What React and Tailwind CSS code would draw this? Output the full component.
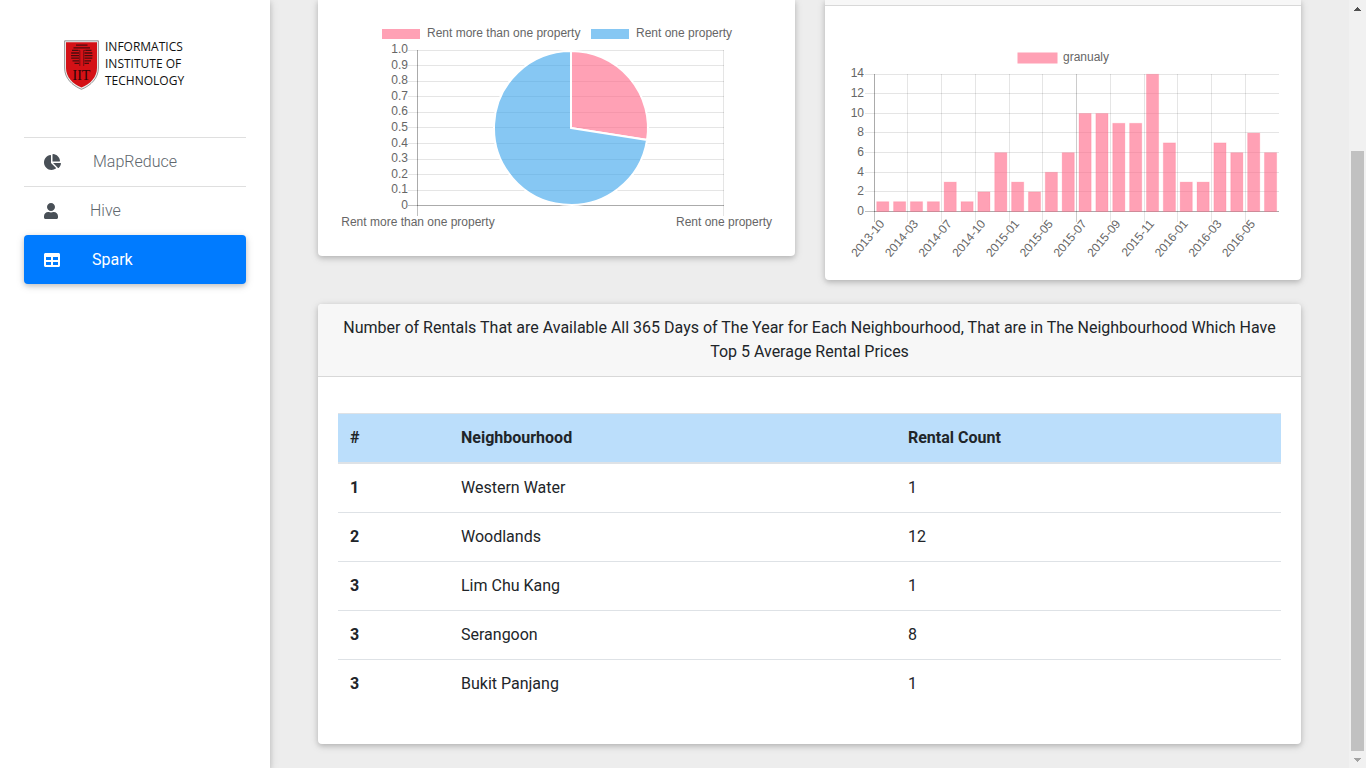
import React from "react";
import { FaChartPie, FaUser, FaTable } from "react-icons/fa";

const CARD =
  "overflow-hidden rounded bg-white shadow-[0_2px_5px_rgba(0,0,0,0.16),0_2px_10px_rgba(0,0,0,0.12)]";
const CHART_FONT = "font-['Liberation_Sans',Arial,sans-serif] text-[12px] fill-[#666666]";

const PINK = "rgba(255,99,132,0.6)";
const BLUE = "rgba(54,162,235,0.6)";
const GRID = "rgba(0,0,0,0.1)";
const ZERO = "rgba(0,0,0,0.25)";

const NAV = [
  { label: "MapReduce", Icon: FaChartPie, size: "w-[17px]" },
  { label: "Hive", Icon: FaUser, size: "w-[14px]" },
  { label: "Spark", Icon: FaTable, size: "w-4", active: true },
];

const ROWS = [
  ["1", "Western Water", "1"],
  ["2", "Woodlands", "12"],
  ["3", "Lim Chu Kang", "1"],
  ["3", "Serangoon", "8"],
  ["3", "Bukit Panjang", "1"],
];

const REVIEWS = [1, 1, 1, 1, 3, 1, 2, 6, 3, 2, 4, 6, 10, 10, 9, 9, 14, 7, 3, 3, 7, 6, 8, 6];
const MONTHS = [
  ["2013-10", 29.5], ["2014-03", 62.5], ["2014-07", 96.5], ["2014-10", 130.5],
  ["2015-01", 164.5], ["2015-05", 197.5], ["2015-07", 231.5], ["2015-09", 265.5],
  ["2015-11", 299.5], ["2016-01", 332.5], ["2016-03", 366.5], ["2016-05", 400.5],
];

function Crest() {
  return (
    <svg viewBox="0 0 35 50" className="mt-0.5 h-[50px] w-[35px] shrink-0" aria-hidden="true">
      <path
        d="M0.6 0.8 H34.4 V28 C34.4 38 27 45.5 17.5 49.3 C8 45.5 0.6 38 0.6 28 Z"
        fill="#eeeeee"
        stroke="#8c8c8c"
        strokeWidth="0.9"
      />
      <path
        d="M2 2.2 H33 V28 C33 37 26.4 44 17.5 47.6 C8.600 44 2 37 2 28 Z"
        fill="#d41116"
      />
      <g stroke="#4a0c0e" strokeWidth="1.3" fill="none">
        <path d="M12 5.200 H23.500 M9.500 7.800 H26 M8 10.400 H14 M21.500 10.400 H27.500 M7.200 13 H15 M20.500 13 H28.300 M7 15.600 H15 M20.500 15.600 H28.500 M7.200 18.200 H15 M20.500 18.200 H28.300 M8.500 20.800 H15 M20.500 20.800 H27 M10.500 23.400 H15 M20.500 23.400 H25" />
        <path d="M14 10.400 H15.800 V26 M21.500 10.400 H19.700 V26" strokeWidth="0.7" />
      </g>
      <text
        x="17.500"
        y="39.500"
        textAnchor="middle"
        className="fill-[#2a0507] font-['Liberation_Serif',serif] text-[14px]"
      >
        IIT
      </text>
    </svg>
  );
}

function Sidebar() {
  return (
    <aside className="sticky top-0 z-10 h-screen w-[270px] shrink-0 bg-white px-6 shadow-[0_2px_5px_rgba(0,0,0,0.16),0_2px_10px_rgba(0,0,0,0.12)]">
      <a href="#" className="flex items-start gap-1.5 pt-[38px] pb-[45px] pl-10">
        <Crest />
        <span className="font-['Open_Sans',sans-serif] text-[12px] leading-[17px] font-medium whitespace-nowrap text-[#111111]">
          INFORMATICS
          <br />
          INSTITUTE OF
          <br />
          TECHNOLOGY
        </span>
      </a>
      <nav className="pt-0.5">
        {NAV.map(({ label, Icon, size, active }) => (
          <a
            key={label}
            href={"#" + label.toLowerCase()}
            aria-current={active ? "page" : undefined}
            className={
              active
                ? "flex h-[49px] items-center gap-8 rounded bg-[#007bff] px-5 text-white shadow-[0_2px_5px_rgba(0,0,0,0.16),0_2px_10px_rgba(0,0,0,0.12)]"
                : "flex h-[49px] items-center gap-8 border-t border-[#dfdfdf] px-5 text-[#495057]"
            }
          >
            <Icon className={"h-4 shrink-0 " + size} />
            <span className={active ? "leading-6 font-normal" : "leading-6 text-[#60676d]"}>{label}</span>
          </a>
        ))}
      </nav>
    </aside>
  );
}

function PropertyPie() {
  const rows = [32.5, 47.5, 63.5, 78.5, 94.5, 109.5, 125.5, 141.5, 156.5, 172.5, 187.5];
  const labels = ["1.0", "0.9", "0.8", "0.7", "0.6", "0.5", "0.4", "0.3", "0.2", "0.1", "0"];
  const cx = 233;
  const cy = 110;
  const r = 77;
  const a = (8.9 * Math.PI) / 180;
  const ex = cx + r * Math.cos(a);
  const ey = cy + r * Math.sin(a);
  return (
    <svg
      viewBox="0 0 436 218"
      preserveAspectRatio="xMinYMin meet"
      className="block h-[218px] w-full overflow-visible"
      role="img"
      aria-label="Share of hosts by number of properties"
    >
      <g shapeRendering="crispEdges">
        <rect x="44" y="11" width="38" height="10" fill={PINK} />
        <rect x="253" y="11" width="38" height="10" fill={BLUE} />
      </g>
      <g className={CHART_FONT}>
        <text x="89" y="19">Rent more than one property</text>
        <text x="298" y="19">Rent one property</text>
        {labels.map((t, i) => (
          <text key={t} x="70" y={Math.round(35.2 + 15.55 * i)} textAnchor="end">{t}</text>
        ))}
        <text x="80" y="208" textAnchor="middle">Rent more than one property</text>
        <text x="386" y="208" textAnchor="middle">Rent one property</text>
      </g>
      {rows.map((y, i) => (
        <path key={y} d={`M70 ${y} H386`} stroke={i === 10 ? ZERO : GRID} />
      ))}
      <path d="M79.500 32 V198" stroke={ZERO} />
      <path d="M385.500 32 V198" stroke={GRID} />
      <path d="M79.500 32 V188 M79 187.500 H386" stroke={GRID} />
      <path
        d={`M${cx} ${cy} V${cy - r} A${r} ${r} 0 0 1 ${ex} ${ey} Z`}
        fill={PINK}
        stroke="#fff"
        strokeWidth="2"
      />
      <path
        d={`M${cx} ${cy} L${ex} ${ey} A${r} ${r} 0 1 1 ${cx} ${cy - r} Z`}
        fill={BLUE}
        stroke="#fff"
        strokeWidth="2"
      />
    </svg>
  );
}

function ReviewBars() {
  const rows = [32.5, 51.5, 71.5, 90.5, 110.5, 130.5, 149.5, 169.5];
  const step = 16.86;
  const x0 = 29.5;
  return (
    <svg
      viewBox="0 0 436 218"
      preserveAspectRatio="xMinYMin meet"
      className="block h-[218px] w-full overflow-visible"
      role="img"
      aria-label="Monthly counts"
    >
      <rect x="172.500" y="10.500" width="40" height="11" fill={PINK} />
      <g className={CHART_FONT}>
        <text x="218" y="19">granualy</text>
        {rows.map((y, i) => (
          <text key={y} x="19" y={i === 0 ? 35 : y + 3.5} textAnchor="end">{14 - 2 * i}</text>
        ))}
        {MONTHS.map(([m], k) => (
          <text
            key={m}
            textAnchor="end"
            transform={`translate(${x0 + step / 2 - 1 + k * 2 * step} 179.500) rotate(-50)`}
            y="4"
          >
            {m}
          </text>
        ))}
      </g>
      {rows.map((y, i) => (
        <path key={y} d={`M20 ${y} H434`} stroke={i === 7 ? ZERO : GRID} />
      ))}
      {MONTHS.map(([m, x], k) => (
        <path
          key={m}
          d={`M${x} 32 V180`}
          stroke={k === 0 ? ZERO : k === 6 ? "rgba(0,0,0,0.2)" : GRID}
        />
      ))}
      <path d="M29.500 32 V170 M29 169.500 H434" stroke={GRID} />
      {REVIEWS.map((v, i) => {
        const h = v * 9.8;
        return (
          <rect
            key={i}
            x={x0 + i * step + 2.2}
            y={169.5 - h}
            width="12.140"
            height={h}
            fill={PINK}
            stroke="rgba(255,99,132,0.2)"
          />
        );
      })}
    </svg>
  );
}

function RentalTable() {
  return (
    <table className="w-full table-fixed border-collapse text-left text-base leading-6 font-normal">
      <thead>
        <tr className="border-t border-b-2 border-t-[#dee2e6] border-b-[#dee2e6] bg-[#bbdefb]">
          <th scope="col" className="w-[111px] p-3 font-bold">#</th>
          <th scope="col" className="w-[47.4%] p-3 font-bold">Neighbourhood</th>
          <th scope="col" className="p-3 font-bold">Rental Count</th>
        </tr>
      </thead>
      <tbody>
        {ROWS.map(([id, name, count]) => (
          <tr key={name} className="border-t border-[#dee2e6] first:border-t-0">
            <th scope="row" className="p-3 font-bold">{id}</th>
            <td className="p-3">{name}</td>
            <td className="p-3">{count}</td>
          </tr>
        ))}
      </tbody>
    </table>
  );
}

function ScrollRail() {
  return (
    <div className="sticky top-0 flex h-screen w-[17px] shrink-0 flex-col items-stretch bg-[#f1f1f1] px-0.5" aria-hidden="true">
      <div className="flex h-[17px] items-center justify-center">
        <svg viewBox="0 0 7 4" className="h-1 w-[7px]" shapeRendering="crispEdges">
          <path d="M3 0h1v1h1v1h1v1h1v1H0V3h1V2h1V1h1z" fill="#505050" />
        </svg>
      </div>
      <div className="flex-[134]" />
      <div className="flex-[600] bg-[#c1c1c1]" />
      <div className="flex h-[17px] items-center justify-center">
        <svg viewBox="0 0 7 4" className="h-1 w-[7px]" shapeRendering="crispEdges">
          <path d="M0 0h7v1H6v1H5v1H4v1H3V3H2V2H1V1H0z" fill="#a3a3a3" />
        </svg>
      </div>
    </div>
  );
}

export default function App() {
  return (
    <div className="flex min-h-screen bg-[#ededed] font-[Roboto,sans-serif] font-light text-[#212529]">
      <Sidebar />
      <main className="min-w-0 flex-1 px-12 pb-6">
        <div className="mb-6 grid grid-cols-2 items-start gap-x-[30px]">
          <section className={CARD + " rounded-t-none px-5 pt-[18px] pb-5"}>
            <PropertyPie />
          </section>
          <section className={CARD + " rounded-t-none"}>
            <div className="h-1.5 border-b border-[#d8d8d8] bg-[#f7f7f7]" />
            <div className="px-5 pt-9 pb-5">
              <ReviewBars />
            </div>
          </section>
        </div>
        <section className={CARD}>
          <h2 className="border-b border-[#d8d8d8] bg-[#f7f7f7] px-5 py-3 text-center text-base leading-6 font-normal">
            Number of Rentals That are Available All 365 Days of The Year for Each Neighbourhood, That are in The
            Neighbourhood Which Have Top 5 Average Rental Prices
          </h2>
          <div className="px-5 py-9">
            <RentalTable />
          </div>
        </section>
      </main>
      <ScrollRail />
    </div>
  );
}
